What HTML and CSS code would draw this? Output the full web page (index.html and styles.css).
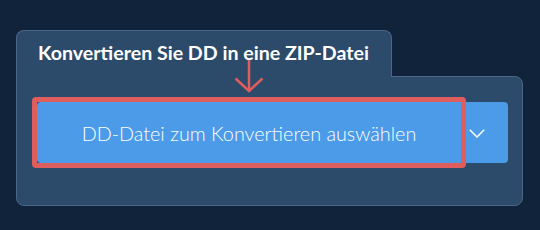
FILE: index.html
```html
<!DOCTYPE html>
<html lang="de">
<head>
<meta charset="utf-8">
<title>DD in ZIP konvertieren</title>
<link rel="stylesheet" href="styles.css">
</head>
<body>
<div class="page">
  <div class="tab"><h1 class="title">Konvertieren Sie DD in eine ZIP-Datei</h1></div>
  <div class="panel">
    <div class="btn-group">
      <button class="main-btn" type="button">DD-Datei zum Konvertieren auswählen</button>
      <button class="drop-btn" type="button" aria-label="Weitere Optionen">
        <svg class="chevron" width="16" height="9" viewBox="0 0 16 9"><polyline points="0.8,0.8 8,8 15.2,0.8" fill="none" stroke="#ffffff" stroke-width="1.5"/></svg>
      </button>
    </div>
  </div>
  <svg class="pointer" width="30" height="34" viewBox="0 0 30 34">
    <line x1="15" y1="1" x2="15" y2="31" stroke="#e05d5d" stroke-width="2.5"/>
    <polyline points="1.5,19.5 15,32 28.5,19.5" fill="none" stroke="#e05d5d" stroke-width="2.5"/>
  </svg>
</div>
</body>
</html>
```
FILE: styles.css
```css
html, body {
  margin: 0;
  padding: 0;
  background: #10233a;
  font-family: Lato, "Noto Sans", sans-serif;
}

.page {
  position: relative;
  padding: 30px 17px 0 16px;
}

.tab {
  position: relative;
  z-index: 1;
  display: inline-block;
  box-sizing: border-box;
  height: 47px;
  margin-bottom: -1px;
  padding: 10px 22px 0 21px;
  background: #2c4a6a;
  border: 1px solid #4b6686;
  border-bottom: none;
  border-radius: 8px 8px 0 0;
}

.title {
  margin: 0;
  font-size: 19.6px;
  line-height: 24px;
  font-weight: 700;
  color: #ffffff;
  white-space: nowrap;
}

.panel {
  box-sizing: border-box;
  height: 130px;
  padding: 25px 14px 0 20px;
  background: #2c4a6a;
  border: 1px solid #4b6686;
  border-radius: 0 8px 8px 8px;
}

.btn-group {
  display: flex;
  height: 61px;
}

.main-btn {
  position: relative;
  flex: 1;
  margin: 0;
  padding: 0;
  border: none;
  border-radius: 4px 0 0 4px;
  background: #4b9be8;
  color: #ffffff;
  font-family: Lato, "Noto Sans", sans-serif;
  font-size: 19.8px;
  line-height: 24px;
  font-weight: 300;
}

.main-btn::after {
  content: "";
  position: absolute;
  top: -5px;
  left: -5px;
  right: -5px;
  bottom: -5px;
  border: 5px solid #e05d5d;
  border-radius: 4px;
}

.drop-btn {
  width: 47px;
  margin: 0;
  padding: 0 0 0 8px;
  border: none;
  border-radius: 0 4px 4px 0;
  background: #4b9be8;
  display: flex;
  align-items: center;
  justify-content: flex-start;
}

.chevron {
  display: block;
  margin-top: 1px;
}

.pointer {
  position: absolute;
  z-index: 2;
  left: 234px;
  top: 59px;
}
```
